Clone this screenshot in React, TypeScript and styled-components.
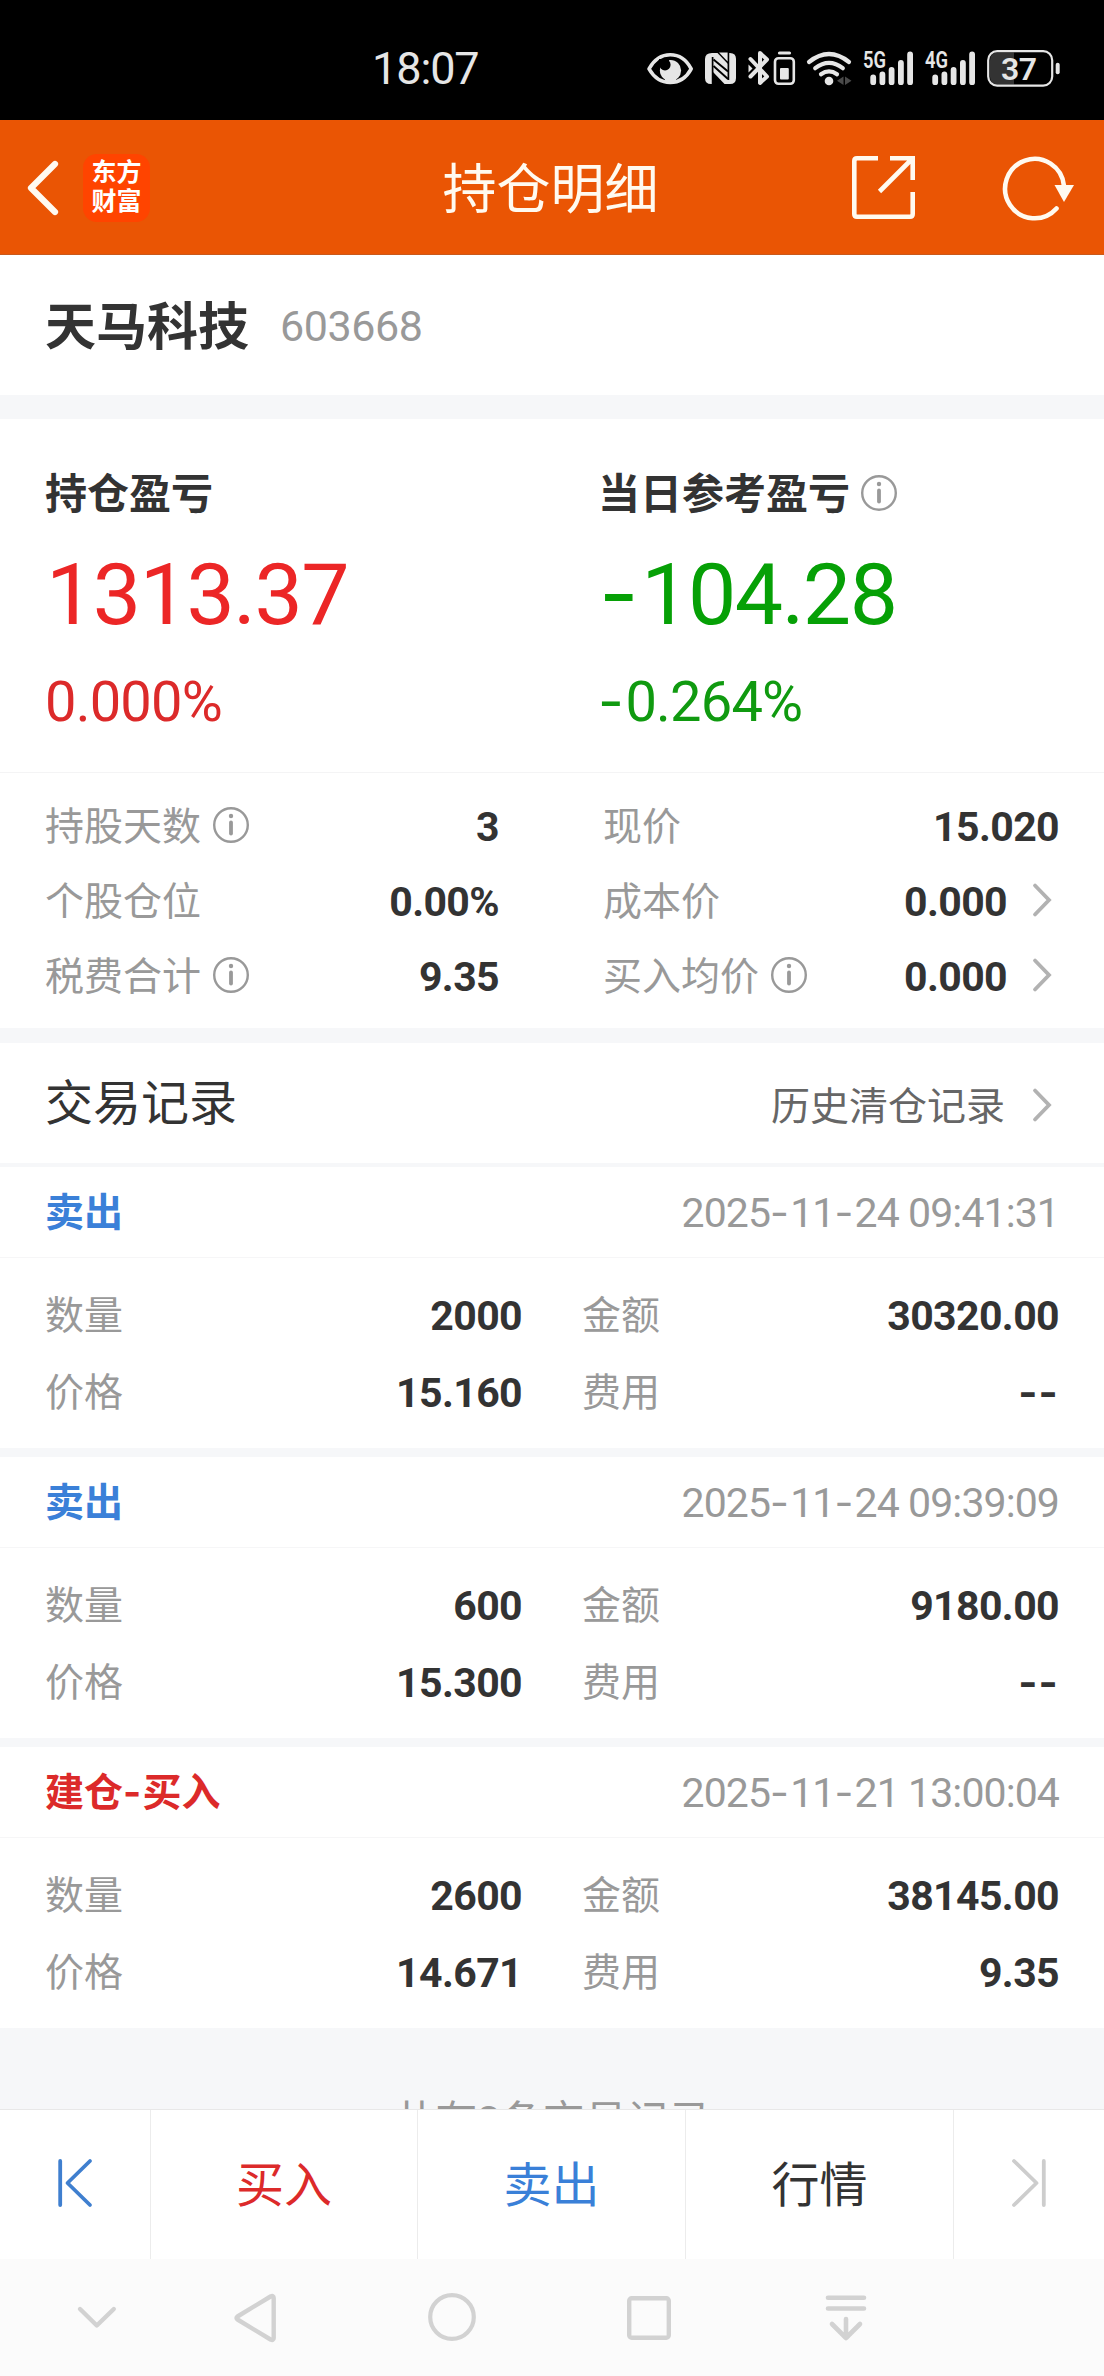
import React from 'react';
import styled, { createGlobalStyle } from 'styled-components';

const GlobalStyle = createGlobalStyle`
  * { box-sizing: border-box; }
  body {
    margin: 0;
    background: #fff;
    font-family: Roboto, "Noto Sans CJK SC", sans-serif;
    line-height: 1.2;
    color: #333;
  }
  svg { display: block; flex: none; overflow: visible; }
`;

const Screen = styled.div`
  width: 1104px;
  height: 2376px;
  display: flex;
  flex-direction: column;
  overflow: hidden;
  background: #fff;
`;

/* ---------- status bar ---------- */

const StatusBar = styled.div`
  flex: none;
  height: 120px;
  padding: 16px 43px 0 372px;
  background: #000;
  color: #e6e6e6;
  display: flex;
  align-items: center;
  justify-content: space-between;
`;

const Clock = styled.span`
  padding-top: 1px;
  font-size: 45px;
  line-height: 52px;
  letter-spacing: -1.1px;
`;

const StatusIcons = styled.div`
  display: flex;
  align-items: center;
  gap: 11px;
`;

/* ---------- header ---------- */

const Header = styled.header`
  flex: none;
  height: 135px;
  padding: 1px 30px 0 27px;
  background: #ea5504;
  border-bottom: 1px solid #c9591c;
  display: grid;
  grid-template-columns: 1fr auto 1fr;
  align-items: center;
  color: #fffaf0;
`;

const HeaderLeft = styled.div`
  display: flex;
  align-items: center;
  gap: 24px;
`;

const HeaderRight = styled.div`
  display: flex;
  align-items: center;
  justify-content: flex-end;
  gap: 88px;
`;

const Logo = styled.div`
  width: 67px;
  height: 68px;
  border-radius: 14px;
  background: #ff4400;
  color: #fff;
  font-size: 25px;
  font-weight: 700;
  line-height: 29px;
  text-align: center;
  padding-top: 4px;
`;

const Title = styled.h1`
  margin: 0;
  padding-top: 6px;
  font-size: 54px;
  font-weight: 400;
  line-height: 64px;
`;

/* ---------- shared ---------- */

const Band = styled.div<{ $h: number }>`
  flex: none;
  height: ${(p) => p.$h}px;
  background: #f6f7f9;
`;

const Dash = styled.span`
  font-family: Inter, Roboto, sans-serif;
  letter-spacing: 0;
  line-height: 0;
  margin-right: 0.03em;
`;

const Dashed = ({ text }: { text: string }) => (
  <span>
    {text.split(/(-)/).map((part, i) => (part === '-' ? <Dash key={i}>-</Dash> : part))}
  </span>
);

/* ---------- stock ---------- */

const Stock = styled.section`
  flex: none;
  height: 140px;
  padding: 1px 45px 0;
  display: flex;
  align-items: center;
  gap: 31px;
`;

const StockName = styled.span`
  padding-top: 4px;
  font-size: 51px;
  font-weight: 700;
  line-height: 60px;
`;

const StockCode = styled.span`
  font-size: 43px;
  line-height: 60px;
  letter-spacing: -0.4px;
  color: #999;
`;

/* ---------- profit ---------- */

const Profit = styled.section`
  flex: none;
  height: 353px;
  padding: 49px 45px 0;
  display: grid;
  grid-template-columns: 553px 1fr;
`;

const ProfitLabel = styled.div`
  display: flex;
  align-items: center;
  gap: 11px;
  height: 54px;
  font-size: 42px;
  font-weight: 700;
`;

const ProfitValue = styled.div<{ $color: string }>`
  margin: 23px 0 0 1px;
  font-size: 86px;
  line-height: 100px;
  letter-spacing: -1.5px;
  color: ${(p) => p.$color};
`;

const ProfitRate = styled.div<{ $color: string }>`
  margin-top: 25px;
  font-size: 56px;
  line-height: 64px;
  letter-spacing: -0.8px;
  color: ${(p) => p.$color};
`;

/* ---------- details ---------- */

const Details = styled.section`
  flex: none;
  height: 256px;
  border-top: 1px solid #f4f4f5;
  padding: 16px 45px 0;
  display: grid;
  grid-template-columns: 454px 456px;
  grid-auto-rows: 75px;
  column-gap: 104px;
`;

const Row = styled.div`
  display: flex;
  align-items: center;
  justify-content: space-between;
`;

const Label = styled.span`
  display: flex;
  align-items: center;
  gap: 12px;
  font-size: 39px;
  line-height: 50px;
  color: #999;
`;

const Value = styled.span`
  display: flex;
  align-items: center;
  font-size: 41px;
  font-weight: 700;
  line-height: 50px;
  letter-spacing: -0.6px;
`;

const ArrowSlot = styled.span<{ $gap: number }>`
  margin-left: ${(p) => p.$gap}px;
  margin-right: 8px;
  padding-bottom: 4px;
`;

/* ---------- records ---------- */

const RecordsTitle = styled.div`
  flex: none;
  height: 120px;
  padding: 2px 45px 0;
  display: flex;
  align-items: center;
  justify-content: space-between;
  font-size: 48px;
`;

const HistoryLink = styled.a`
  display: flex;
  align-items: center;
  padding-top: 7px;
  font-size: 39px;
  color: #666;
`;

const RecordHead = styled.div`
  flex: none;
  height: 91px;
  padding: 3px 45px 0;
  border-bottom: 1px solid #f6f6f7;
  display: flex;
  align-items: center;
  justify-content: space-between;
`;

const Side = styled.span<{ $color: string }>`
  font-size: 39px;
  font-weight: 700;
  color: ${(p) => p.$color};
`;

const Time = styled.span`
  font-size: 41px;
  letter-spacing: -0.9px;
  color: #999;
`;

const RecordBody = styled.div`
  flex: none;
  height: 190px;
  padding: 19px 45px 0;
  display: grid;
  grid-template-columns: 477px 477px;
  grid-auto-rows: 77px;
  column-gap: 60px;
`;

const Footer = styled.div`
  flex: none;
  height: 81px;
  padding-top: 69px;
  overflow: hidden;
  background: #f6f7f9;
  font-size: 42px;
  line-height: 50px;
  text-align: center;
  color: #999;
`;

/* ---------- bottom ---------- */

const Toolbar = styled.nav`
  flex: none;
  height: 150px;
  border-top: 1px solid #e8e8e8;
  background: #fff;
  display: grid;
  grid-template-columns: 151px 267px 268px 268px 150px;
`;

const Tab = styled.button<{ $color: string }>`
  margin: 0;
  padding: 3px 0 0;
  border: 0;
  border-right: 1px solid #ececec;
  background: none;
  display: flex;
  align-items: center;
  justify-content: center;
  font: inherit;
  font-size: 48px;
  color: ${(p) => p.$color};
  &:last-child { border-right: 0; }
  svg { margin-bottom: 7px; }
`;

const SystemNav = styled.div`
  flex: 1;
  background: #fbfbfb;
  display: grid;
  grid-template-columns: 119px repeat(4, 197px);
  align-items: center;
  justify-items: center;
  padding-left: 37px;
`;

/* ---------- icons ---------- */

const InfoSvg = styled.svg`
  margin-bottom: 4px;
`;

const Info = () => (
  <InfoSvg width="36" height="36" viewBox="0 0 36 36" fill="none" stroke="#999">
    <circle cx="18" cy="18" r="16.8" strokeWidth="2.4" />
    <path d="M18 15.5V26.5" strokeWidth="3.8" strokeLinecap="round" />
    <circle cx="18" cy="9" r="2.2" fill="#999" stroke="none" />
  </InfoSvg>
);

const Arrow = () => (
  <svg width="18" height="34" viewBox="0 0 18 34" fill="none" stroke="#b2b2b2" strokeWidth="3.8" strokeLinecap="round">
    <path d="M2 2.5L16 17L2 31.5" />
  </svg>
);

const Bars = ({ label }: { label: string }) => (
  <svg width="51" height="38" viewBox="863 48 51 38">
    <text x="863" y="67" fontSize="23" fontWeight="600" fill="#e6e6e6" textLength="23" lengthAdjust="spacingAndGlyphs">
      {label}
    </text>
    <g stroke="#e6e6e6" strokeWidth="5.8" strokeLinecap="round">
      <path d="M873.2 76.5V81.2M882.4 73.5V81.2M891.6 69V81.2M900.9 62V81.2M910.1 53.5V81.2" />
    </g>
  </svg>
);

const EyeIcon = () => (
  <svg width="47" height="38" viewBox="647 48 47 38">
    <path
      d="M649 67.8C654 59 661.5 53.8 670.2 53.8S686.5 59 691.2 67.8C686.5 76.5 679 81.4 670.2 81.4S654 76.5 649 67.8Z"
      fill="none"
      stroke="#e6e6e6"
      strokeWidth="3.6"
      strokeLinejoin="round"
    />
    <circle cx="670.5" cy="69.5" r="10.6" fill="#e6e6e6" />
    <path d="M664 76H677L675 82H666Z" fill="#e6e6e6" />
    <circle cx="665" cy="63.8" r="5.6" fill="#000" />
    <path d="M659 58H669V62H659Z" fill="#000" />
  </svg>
);

const NfcIcon = () => (
  <svg width="32" height="38" viewBox="705 48 32 38">
    <path d="M712 52H730Q736 52 736 58V77Q736 83 730 83H711Q705 83 705 77V58Q705 52 712 52Z" fill="#e6e6e6" />
    <path d="M712.6 56V83M728.4 52V79" stroke="#000" strokeWidth="1.7" />
    <path d="M713.5 58.5L728 70.5M713.5 65L728 78" stroke="#000" strokeWidth="1.9" />
    <path d="M713 71L724.5 83H713Z" fill="#000" />
    <path d="M717.5 52L728 63V52Z" fill="#000" />
    <path d="M719 51.5H727.6V60.5Z" fill="#e6e6e6" />
  </svg>
);

const BluetoothIcon = () => (
  <svg width="48" height="38" viewBox="748 48 48 38" fill="none" stroke="#e6e6e6">
    <path d="M750.5 58L767 75.5L760 82V52L767 58.5L750.5 75.5" strokeWidth="4" strokeLinecap="round" strokeLinejoin="round" />
    <path d="M748.5 63.5L752.5 67.5L748.5 71.5Z" fill="#e6e6e6" stroke="none" />
    <rect x="775" y="57.2" width="18.8" height="25.6" rx="3.5" strokeWidth="2.6" />
    <path d="M779.5 52H789.5" strokeWidth="3.2" strokeLinecap="round" />
    <rect x="780" y="67" width="8.8" height="11.5" rx="1" fill="#e6e6e6" stroke="none" />
  </svg>
);

const WifiIcon = () => (
  <svg width="45" height="38" viewBox="807 48 45 38" fill="none" stroke="#e6e6e6" strokeWidth="4.2" strokeLinecap="round">
    <path d="M809 61Q829 45 849 61M815.2 67.2Q829 56.5 842.8 67.2M821 73.2Q829 67.5 837 73.2" />
    <circle cx="829" cy="80" r="4.3" fill="#e6e6e6" stroke="none" />
    <path d="M843.5 75.5V84L837 79.8ZM845 75.5V84L851.5 79.8Z" fill="#4a4a4a" stroke="none" />
  </svg>
);

const BatteryIcon = () => (
  <svg width="74" height="38" viewBox="987 48 74 38">
    <path d="M998 51.5H1014V83.5H998Q990 83.5 990 75.5V59.5Q990 51.5 998 51.5Z" fill="#333" />
    <rect x="988.2" y="50.2" width="64" height="34.4" rx="9" fill="none" stroke="#e6e6e6" strokeWidth="2.2" />
    <path d="M1057.7 63.8V71.2" stroke="#e6e6e6" strokeWidth="4" strokeLinecap="round" />
    <text x="1001" y="79" fontSize="32" fontWeight="600" fill="#e6e6e6" textLength="36">
      37
    </text>
  </svg>
);

/* ---------- data ---------- */

const RED = '#dc2a2a';
const BLUE = '#3a80d8';

const records = [
  { side: '卖出', color: BLUE, time: '2025-11-24 09:41:31', qty: '2000', amount: '30320.00', price: '15.160', fee: '--' },
  { side: '卖出', color: BLUE, time: '2025-11-24 09:39:09', qty: '600', amount: '9180.00', price: '15.300', fee: '--' },
  { side: '建仓-买入', color: RED, time: '2025-11-21 13:00:04', qty: '2600', amount: '38145.00', price: '14.671', fee: '9.35' },
];

const details = [
  { label: '持股天数', info: true, value: '3' },
  { label: '现价', value: '15.020' },
  { label: '个股仓位', value: '0.00%' },
  { label: '成本价', value: '0.000', link: true },
  { label: '税费合计', info: true, value: '9.35' },
  { label: '买入均价', info: true, value: '0.000', link: true },
];

const Pair = ({ label, value }: { label: string; value: string }) => (
  <Row>
    <Label>{label}</Label>
    <Value>
      <Dashed text={value} />
    </Value>
  </Row>
);

export default function App() {
  return (
    <Screen>
      <GlobalStyle />
      <StatusBar>
        <Clock>18:07</Clock>
        <StatusIcons>
          <EyeIcon />
          <NfcIcon />
          <BluetoothIcon />
          <WifiIcon />
          <Bars label="5G" />
          <Bars label="4G" />
          <BatteryIcon />
        </StatusIcons>
      </StatusBar>

      <Header>
        <HeaderLeft>
          <svg width="32" height="56" viewBox="0 0 32 56" fill="none" stroke="#fffaf0" strokeWidth="6.2" strokeLinecap="round" strokeLinejoin="round">
            <path d="M28 4L4 28L28 52" />
          </svg>
          <Logo>
            东方
            <br />
            财富
          </Logo>
        </HeaderLeft>
        <Title>持仓明细</Title>
        <HeaderRight>
          <svg width="63" height="63" viewBox="0 0 63 63" fill="none" stroke="#fffaf0" strokeWidth="4.6">
            <path d="M26 2.3H5Q2.3 2.3 2.3 5V58Q2.3 60.7 5 60.7H58Q60.7 60.7 60.7 58V36" />
            <path d="M38 2.3H60.7V24M60 3L27.5 35.5" />
          </svg>
          <svg width="71" height="64" viewBox="0 0 71 64" fill="none" stroke="#fffaf0" strokeWidth="4.6">
            <path d="M53.5 52.5A29.5 29.7 0 1 1 61 30" strokeLinecap="round" />
            <path d="M51.5 29H71L61 46Z" fill="#fffaf0" stroke="none" />
          </svg>
        </HeaderRight>
      </Header>

      <Stock>
        <StockName>天马科技</StockName>
        <StockCode>603668</StockCode>
      </Stock>
      <Band $h={24} />

      <Profit>
        <div>
          <ProfitLabel>持仓盈亏</ProfitLabel>
          <ProfitValue $color="#ec2626">1313.37</ProfitValue>
          <ProfitRate $color={RED}>0.000%</ProfitRate>
        </div>
        <div>
          <ProfitLabel>
            当日参考盈亏
            <Info />
          </ProfitLabel>
          <ProfitValue $color="#06a006">
            <Dashed text="-104.28" />
          </ProfitValue>
          <ProfitRate $color="#109a10">
            <Dashed text="-0.264%" />
          </ProfitRate>
        </div>
      </Profit>

      <Details>
        {details.map((d) => (
          <Row key={d.label}>
            <Label>
              {d.label}
              {d.info && <Info />}
            </Label>
            <Value>
              {d.value}
              {d.link && (
                <ArrowSlot $gap={26}>
                  <Arrow />
                </ArrowSlot>
              )}
            </Value>
          </Row>
        ))}
      </Details>
      <Band $h={15} />

      <RecordsTitle>
        交易记录
        <HistoryLink>
          历史清仓记录
          <ArrowSlot $gap={28}>
            <Arrow />
          </ArrowSlot>
        </HistoryLink>
      </RecordsTitle>
      <Band $h={4} />

      {records.map((r, i) => (
        <React.Fragment key={r.time}>
          {i > 0 && <Band $h={9} />}
          <RecordHead>
            <Side $color={r.color}>
              <Dashed text={r.side} />
            </Side>
            <Time>
              <Dashed text={r.time} />
            </Time>
          </RecordHead>
          <RecordBody>
            <Pair label="数量" value={r.qty} />
            <Pair label="金额" value={r.amount} />
            <Pair label="价格" value={r.price} />
            <Pair label="费用" value={r.fee} />
          </RecordBody>
        </React.Fragment>
      ))}

      <Footer>共有3条交易记录</Footer>

      <Toolbar>
        <Tab $color={BLUE}>
          <svg width="34" height="48" viewBox="0 0 34 48" fill="none" stroke="#3f7fcf" strokeWidth="3.8" strokeLinecap="round" strokeLinejoin="round">
            <path d="M2.2 2V46M32 2L9.5 24L32 46" />
          </svg>
        </Tab>
        <Tab $color={RED}>买入</Tab>
        <Tab $color={BLUE}>卖出</Tab>
        <Tab $color="#333">行情</Tab>
        <Tab $color="#ccc">
          <svg width="34" height="48" viewBox="0 0 34 48" fill="none" stroke="#cdcdcd" strokeWidth="3.8" strokeLinecap="round" strokeLinejoin="round">
            <path d="M31.8 2V46M2 2L24.5 24L2 46" />
          </svg>
        </Tab>
      </Toolbar>

      <SystemNav>
        <svg width="42" height="52" viewBox="76 2292 42 52" fill="none" stroke="#d2d2d2" strokeWidth="4.4" strokeLinecap="round" strokeLinejoin="round">
          <path d="M80 2309L96.8 2325.5L113.8 2309" />
        </svg>
        <svg width="44" height="52" viewBox="233 2292 44 52" fill="none" stroke="#d2d2d2" strokeWidth="4.4" strokeLinejoin="round">
          <path d="M270.5 2296.5L237.5 2316.5Q235.5 2318 237.5 2319.5L270.5 2339.5Q273.7 2341 273.7 2338V2298Q273.7 2295 270.5 2296.5Z" />
        </svg>
        <svg width="48" height="52" viewBox="428 2292 48 52" fill="none" stroke="#d2d2d2" strokeWidth="4.2">
          <circle cx="452" cy="2317" r="21.8" />
        </svg>
        <svg width="44" height="52" viewBox="627 2292 44 52" fill="none" stroke="#d2d2d2" strokeWidth="4.4">
          <rect x="629.2" y="2298.2" width="39.6" height="39.6" rx="2.5" />
        </svg>
        <svg width="42" height="52" viewBox="825 2292 42 52" fill="none" stroke="#d2d2d2" strokeWidth="4.6" strokeLinecap="round" strokeLinejoin="round">
          <path d="M828 2297.7H864M828 2308.5H864M846 2319V2338M832 2324L846 2338L860 2324" />
        </svg>
      </SystemNav>
    </Screen>
  );
}
